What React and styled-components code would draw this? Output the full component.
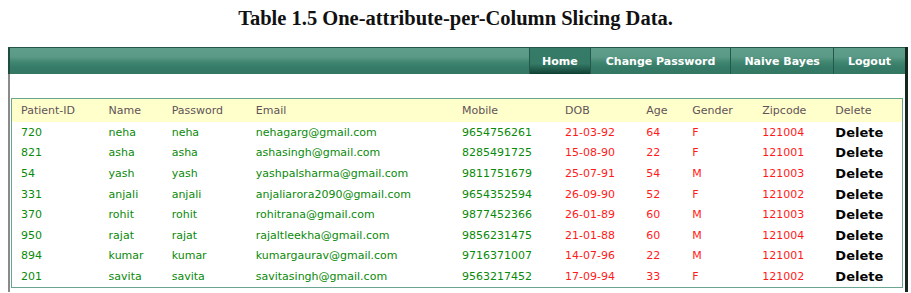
import React from "react";
import styled, { createGlobalStyle } from "styled-components";

const Global = createGlobalStyle`
  html, body { margin: 0; padding: 0; background: #fff; }
  body { padding: 8px; font-family: "DejaVu Sans", Verdana, sans-serif; }
`;

const Title = styled.h1`
  margin: -1px 0 0 0;
  height: 40px;
  text-align: center;
  font-family: "Liberation Serif", "Times New Roman", serif;
  font-weight: bold;
  font-size: 20.5px;
  line-height: 22px;
  color: #111;
`;

const Frame = styled.div`
  width: 895px;
  border-left: 2px solid #8a8a8a;
  border-right: 3px solid #15261f;
  padding-bottom: 4px;
`;

const NavBar = styled.nav`
  height: 26px;
  margin-left: -2px;
  border-left: 2px solid #1e4c40;
  border-top: 1px solid #24574a;
  background: linear-gradient(#5f9e8b 0%, #5a9985 35%, #3f8570 55%, #367b67 75%, #347864 100%);
  display: flex;
  justify-content: flex-end;
`;

const NavItem = styled.a`
  display: flex;
  align-items: center;
  justify-content: center;
  padding: 0 ${(p) => p.$pad}px;
  height: 100%;
  box-sizing: border-box;
  border-left: 1px solid #23594b;
  font-family: "DejaVu Sans", Verdana, sans-serif;
  font-weight: bold;
  font-size: 11px;
  color: #fff;
  text-decoration: none;
  background: ${(p) =>
    p.$active
      ? "linear-gradient(#357b67 0%, #347a66 60%, #245e4f 80%, #103f33 100%)"
      : "transparent"};
`;

const Content = styled.div`
  padding: 24px 2px 0 1px;
`;

const Table = styled.table`
  width: 100%;
  border: 1px solid #6aa592;
  border-collapse: collapse;
  table-layout: fixed;
`;

const HeadCell = styled.th`
  background: #ffffcc;
  height: 23px;
  padding: 0 0 0 9px;
  text-align: left;
  font-weight: normal;
  font-size: 11px;
  color: #5f5258;
  font-family: "DejaVu Sans", Verdana, sans-serif;
`;

const Cell = styled.td`
  height: 20.6px;
  padding: 0 0 0 9px;
  font-size: 11px;
  font-family: "DejaVu Sans", Verdana, sans-serif;
  color: ${(p) => (p.$red ? "#ff1a1a" : "#0a8a0a")};
  white-space: nowrap;
  overflow: hidden;
`;

const DeleteCell = styled.td`
  height: 20.6px;
  padding: 0 0 0 9px;
  font-size: 13px;
  font-weight: bold;
  font-family: "DejaVu Sans", Verdana, sans-serif;
  color: #050505;
`;

const widths = [88, 63, 84, 206, 103, 81, 46, 70, 73, 76];
const heads = ["Patient-ID", "Name", "Password", "Email", "Mobile", "DOB", "Age", "Gender", "Zipcode", "Delete"];

const rows = [
  ["720", "neha", "neha", "nehagarg@gmail.com", "9654756261", "21-03-92", "64", "F", "121004"],
  ["821", "asha", "asha", "ashasingh@gmail.com", "8285491725", "15-08-90", "22", "F", "121001"],
  ["54", "yash", "yash", "yashpalsharma@gmail.com", "9811751679", "25-07-91", "54", "M", "121003"],
  ["331", "anjali", "anjali", "anjaliarora2090@gmail.com", "9654352594", "26-09-90", "52", "F", "121002"],
  ["370", "rohit", "rohit", "rohitrana@gmail.com", "9877452366", "26-01-89", "60", "M", "121003"],
  ["950", "rajat", "rajat", "rajaltleekha@gmail.com", "9856231475", "21-01-88", "60", "M", "121004"],
  ["894", "kumar", "kumar", "kumargaurav@gmail.com", "9716371007", "14-07-96", "22", "M", "121001"],
  ["201", "savita", "savita", "savitasingh@gmail.com", "9563217452", "17-09-94", "33", "F", "121002"],
];

export default function App() {
  return (
    <>
      <Global />
      <Title>Table 1.5 One-attribute-per-Column Slicing Data.</Title>
      <Frame>
        <NavBar>
          <NavItem $active $pad={12}>Home</NavItem>
          <NavItem $pad={15}>Change Password</NavItem>
          <NavItem $pad={13}>Naive Bayes</NavItem>
          <NavItem $pad={14}>Logout</NavItem>
        </NavBar>
        <Content>
          <Table>
            <colgroup>
              {widths.map((w, i) => (
                <col key={i} style={{ width: w }} />
              ))}
            </colgroup>
            <thead>
              <tr>
                {heads.map((h) => (
                  <HeadCell key={h}>{h}</HeadCell>
                ))}
              </tr>
            </thead>
            <tbody>
              {rows.map((r) => (
                <tr key={r[0]}>
                  {r.map((v, i) => (
                    <Cell key={i} $red={i >= 5}>{v}</Cell>
                  ))}
                  <DeleteCell>Delete</DeleteCell>
                </tr>
              ))}
            </tbody>
          </Table>
        </Content>
      </Frame>
    </>
  );
}
